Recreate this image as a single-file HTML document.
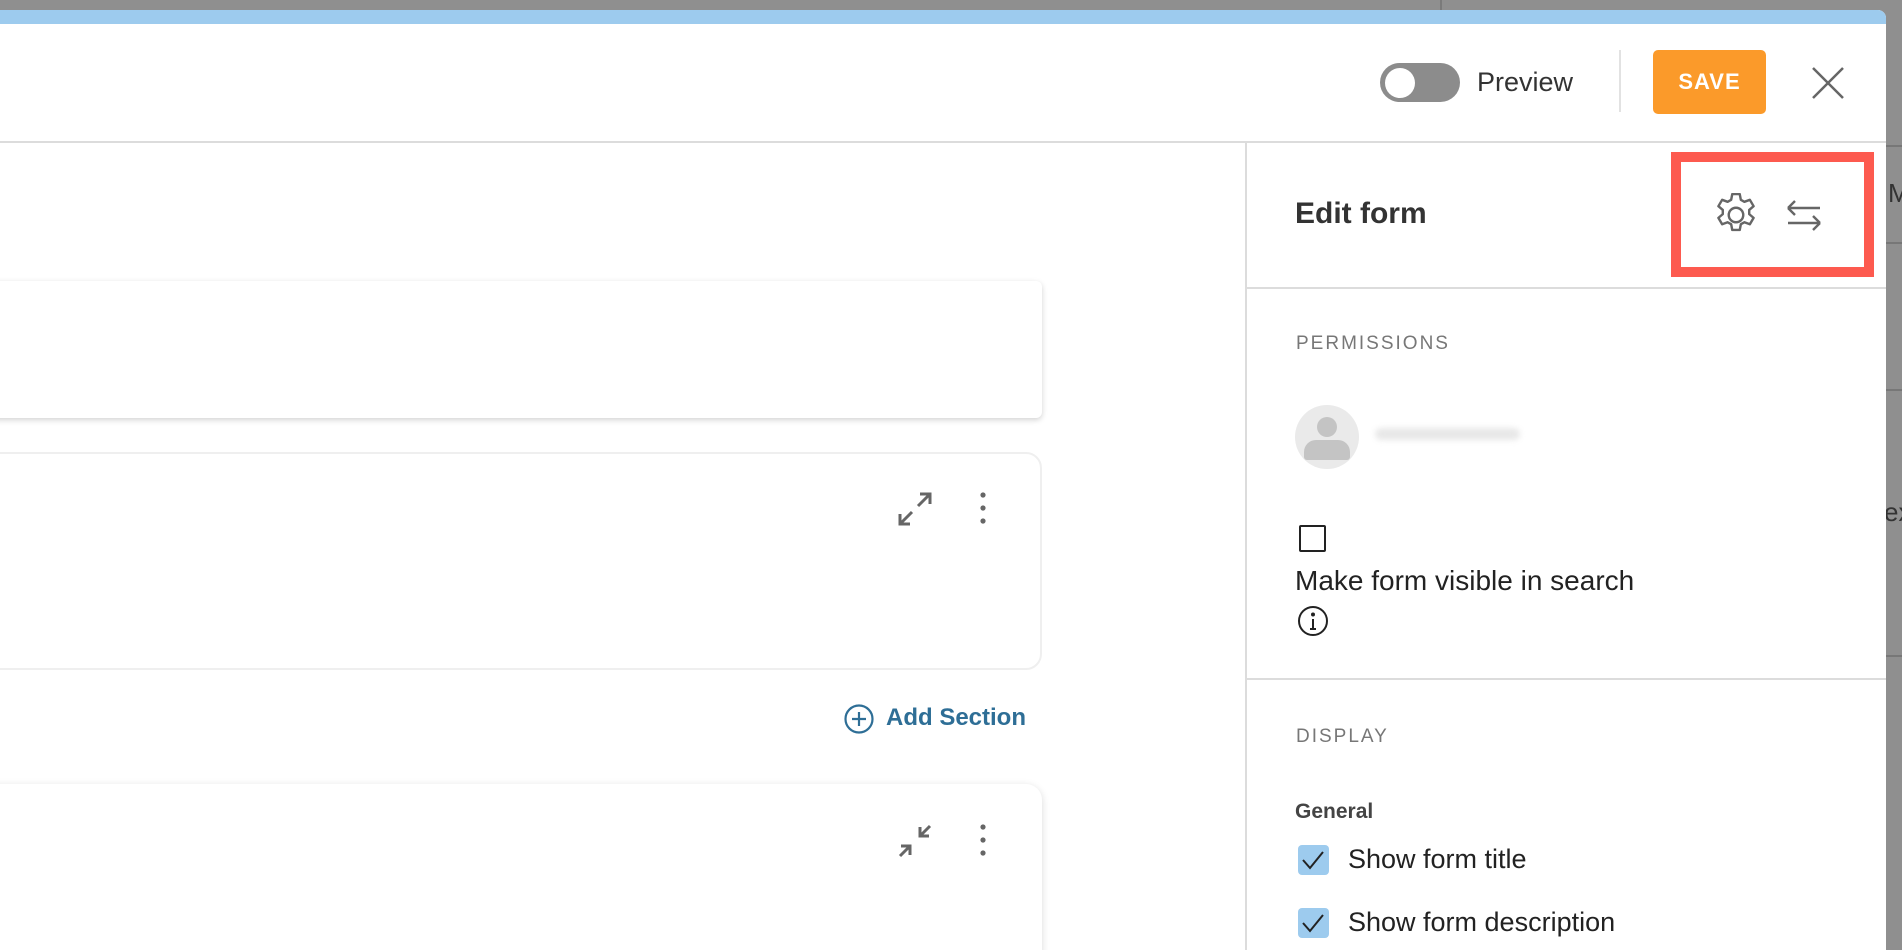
<!DOCTYPE html>
<html><head><meta charset="utf-8"><style>
*{box-sizing:border-box;margin:0;padding:0}
body{width:1902px;height:950px;overflow:hidden;background:#8f8f8f;font-family:"Liberation Sans","DejaVu Sans",sans-serif;position:relative}
.abs{position:absolute}
.modal{left:0;top:10px;width:1886px;height:940px;background:#fff;border-top-right-radius:8px;overflow:hidden}
.blue{left:0;top:0;width:100%;height:14px;background:#9dcbee}
.card{background:#fff;border-radius:12px}
.t{color:#222;white-space:nowrap}
</style></head><body>
<div class="abs" style="left:1440px;top:0;width:2px;height:10px;background:#7a7a7a"></div>
<div class="abs t" style="left:1888px;top:178px;font-size:26px;color:#333">M</div>
<div class="abs t" style="left:1884px;top:497px;font-size:26px;color:#333">ex</div>
<div class="abs" style="left:1886px;top:145px;width:16px;height:2px;background:#777"></div>
<div class="abs" style="left:1886px;top:242px;width:16px;height:2px;background:#777"></div>
<div class="abs" style="left:1886px;top:389px;width:16px;height:2px;background:#777"></div>
<div class="abs" style="left:1886px;top:655px;width:16px;height:2px;background:#777"></div>
<div class="abs modal">
 <div class="abs blue"></div>
 <div class="abs" style="left:1380px;top:53px;width:80px;height:39px;border-radius:20px;background:#8c8c8c"></div>
 <div class="abs" style="left:1385px;top:58px;width:30px;height:30px;border-radius:50%;background:#fff"></div>
 <div class="abs t" style="left:1477px;top:57px;font-size:27px;color:#333">Preview</div>
 <div class="abs" style="left:1619px;top:40px;width:2px;height:62px;background:#e2e2e2"></div>
 <div class="abs" style="left:1653px;top:40px;width:113px;height:64px;border-radius:5px;background:#fb9a2a;color:#fff;font-size:22px;font-weight:bold;text-align:center;line-height:64px;letter-spacing:1px">SAVE</div>
 <svg class="abs" style="left:1810px;top:55px" width="36" height="36" viewBox="0 0 36 36"><path d="M3 3L33 33M33 3L3 33" stroke="#666" stroke-width="2.5"/></svg>
 <div class="abs" style="left:0;top:131px;width:1886px;height:2px;background:#dcdcdc"></div>
 <div class="abs card" style="left:-20px;top:271px;width:1062px;height:137px;border-radius:6px;box-shadow:0 2px 6px rgba(0,0,0,.18)"></div>
 <div class="abs card" style="left:-20px;top:442px;width:1062px;height:218px;border:2px solid #efefef;border-radius:16px"></div>
 <svg class="abs" style="left:896px;top:480px" width="38" height="38" viewBox="0 0 38 38" fill="none" stroke="#666" stroke-width="3"><path d="M22 16L34 4M24 4H34V14M16 22L4 34M4 24V34H14"/></svg>
 <svg class="abs" style="left:975px;top:480px" width="16" height="36"><circle cx="8" cy="5" r="2.6" fill="#666"/><circle cx="8" cy="18" r="2.6" fill="#666"/><circle cx="8" cy="31" r="2.6" fill="#666"/></svg>
 <svg class="abs" style="left:844px;top:694px" width="30" height="30" viewBox="0 0 30 30" fill="none" stroke="#2e6e96" stroke-width="2.2"><circle cx="15" cy="15" r="13.5"/><path d="M15 8V22M8 15H22"/></svg>
 <div class="abs t" style="left:886px;top:694px;font-size:24px;font-weight:bold;color:#2e6e96">Add Section</div>
 <div class="abs card" style="left:-20px;top:774px;width:1062px;height:200px;border-radius:16px;box-shadow:0 2px 8px rgba(0,0,0,.15)"></div>
 <svg class="abs" style="left:896px;top:812px" width="38" height="38" viewBox="0 0 38 38" fill="none" stroke="#666" stroke-width="3"><path d="M34 4L24 14M24 5V14H33M4 34L14 24M5 24H14V33"/></svg>
 <svg class="abs" style="left:975px;top:812px" width="16" height="36"><circle cx="8" cy="5" r="2.6" fill="#666"/><circle cx="8" cy="18" r="2.6" fill="#666"/><circle cx="8" cy="31" r="2.6" fill="#666"/></svg>
 <div class="abs" style="left:1245px;top:132px;width:2px;height:820px;background:#dcdcdc"></div>
 <div class="abs t" style="left:1295px;top:187px;font-size:30px;font-weight:bold;color:#333">Edit form</div>
 <div class="abs" style="left:1671px;top:142px;width:203px;height:125px;border:10px solid #fd5a4f"></div>
 <svg class="abs" style="left:1714px;top:183px" width="44" height="44" viewBox="2 2 20 20" fill="none" stroke="#666" stroke-width="1.1"><circle cx="12" cy="12" r="3.3"/><path d="M10.3 2.5h3.4l.5 2.6 1.6.9 2.5-.9 1.7 2.9-2 1.7v1.9l2 1.7-1.7 2.9-2.5-.9-1.6.9-.5 2.6h-3.4l-.5-2.6-1.6-.9-2.5.9-1.7-2.9 2-1.7v-1.9l-2-1.7 1.7-2.9 2.5.9 1.6-.9z" stroke-linejoin="round"/></svg>
 <svg class="abs" style="left:1784px;top:186px" width="40" height="38" viewBox="0 0 40 38" fill="none" stroke="#666" stroke-width="2.4"><path d="M4 12H36M4 12L11 5M4 12L11 19M36 27H4M36 27L29 20M36 27L29 34"/></svg>
 <div class="abs" style="left:1247px;top:277px;width:640px;height:2px;background:#dcdcdc"></div>
 <div class="abs t" style="left:1296px;top:323px;font-size:19px;color:#777;letter-spacing:2px">PERMISSIONS</div>
 <div class="abs" style="left:1295px;top:395px;width:64px;height:64px;border-radius:50%;background:#eaeaea;overflow:hidden">
  <div class="abs" style="left:22px;top:12px;width:20px;height:20px;border-radius:50%;background:#c4c4c4"></div>
  <div class="abs" style="left:9px;top:35px;width:46px;height:20px;border-radius:12px 12px 3px 3px;background:#c4c4c4"></div>
 </div>
 <div class="abs" style="left:1375px;top:418px;width:145px;height:12px;border-radius:6px;background:#e8e8e8;filter:blur(3px)"></div>
 <div class="abs" style="left:1299px;top:515px;width:27px;height:27px;border:2.5px solid #222;border-radius:2px"></div>
 <div class="abs t" style="left:1295px;top:555px;font-size:28px">Make form visible in search</div>
 <svg class="abs" style="left:1297px;top:595px" width="32" height="32" viewBox="0 0 32 32" fill="none" stroke="#222" stroke-width="2"><circle cx="16" cy="16" r="14"/><path d="M16 14V24M13 24H19" /><circle cx="16" cy="9.5" r="1" fill="#222"/></svg>
 <div class="abs" style="left:1247px;top:668px;width:640px;height:2px;background:#dcdcdc"></div>
 <div class="abs t" style="left:1296px;top:716px;font-size:19px;color:#777;letter-spacing:2px">DISPLAY</div>
 <div class="abs t" style="left:1295px;top:790px;font-size:21px;font-weight:bold;color:#444">General</div>
 <div class="abs" style="left:1298px;top:835px;width:31px;height:30px;border-radius:4px;background:#9dcbee"></div>
 <svg class="abs" style="left:1298px;top:835px" width="31" height="30"><path d="M5 15L12 23L25 7" fill="none" stroke="#222" stroke-width="2"/></svg>
 <div class="abs t" style="left:1348px;top:834px;font-size:27px">Show form title</div>
 <div class="abs" style="left:1298px;top:898px;width:31px;height:30px;border-radius:4px;background:#9dcbee"></div>
 <svg class="abs" style="left:1298px;top:898px" width="31" height="30"><path d="M5 15L12 23L25 7" fill="none" stroke="#222" stroke-width="2"/></svg>
 <div class="abs t" style="left:1348px;top:897px;font-size:27px">Show form description</div>
</div>
</body></html>
